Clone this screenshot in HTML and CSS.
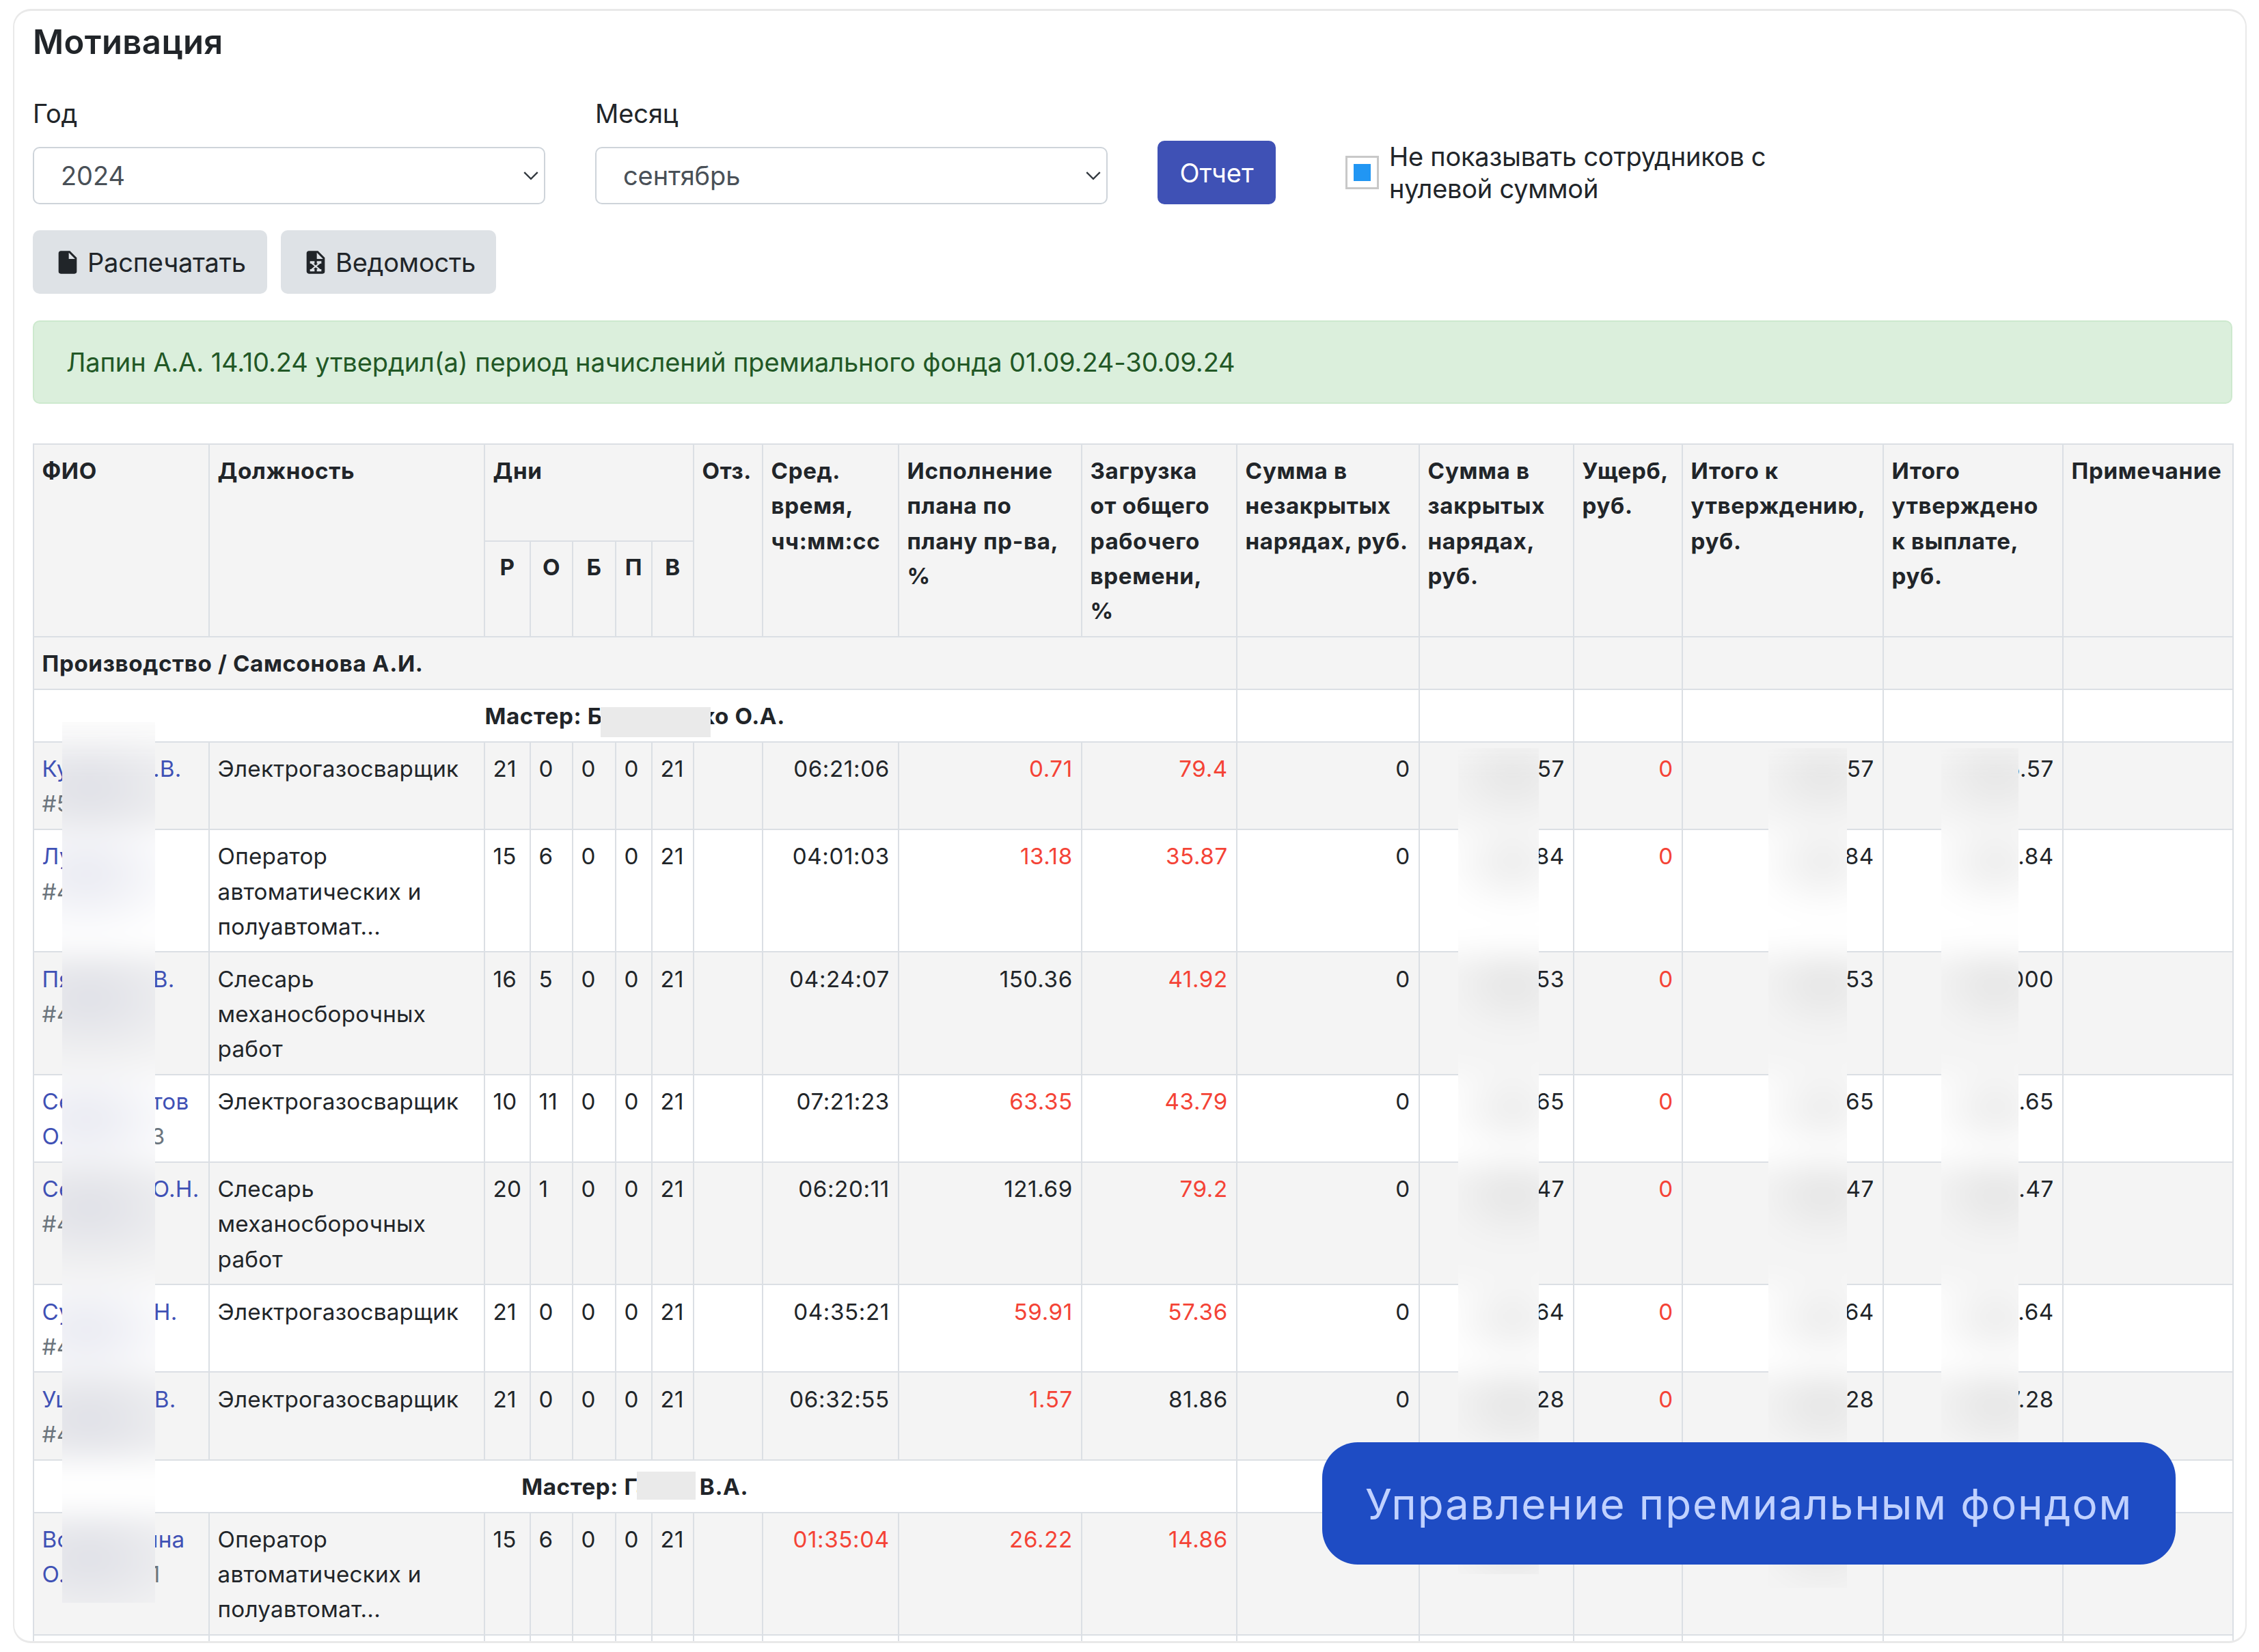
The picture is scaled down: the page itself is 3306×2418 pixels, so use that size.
FILE: index.html
```html
<!DOCTYPE html>
<html lang="ru">
<head>
    <meta charset="UTF-8">
    <meta name="viewport" content="width=device-width, initial-scale=1.0">
    <title>Мотивация</title>
    <link rel="stylesheet" href="styles.css">
</head>
<body>
    <div class="card">
        <h5 class="title">Мотивация</h5>

        <div class="filters">
            <div class="field">
                <label>Год</label>
                <div class="select">
                    <span>2024</span>
                    <svg class="chevron" viewBox="0 0 20 12"><path d="M1 1l9 9 9-9"/></svg>
                </div>
            </div>
            <div class="field">
                <label>Месяц</label>
                <div class="select">
                    <span>сентябрь</span>
                    <svg class="chevron" viewBox="0 0 20 12"><path d="M1 1l9 9 9-9"/></svg>
                </div>
            </div>
            <button class="btn btn-primary">Отчет</button>
            <div class="check">
                <span class="box"></span>
                <span class="check-label">Не показывать сотрудников с<br>нулевой суммой</span>
            </div>
        </div>

        <div class="toolbar">
            <button class="btn btn-light btn-print">
                <svg class="icon" viewBox="0 0 24 24"><path d="M13,9V3.5L18.5,9M6,2C4.89,2 4,2.89 4,4V20A2,2 0 0,0 6,22H18A2,2 0 0,0 20,20V8L14,2H6Z"/></svg>
                <span>Распечатать</span>
            </button>
            <button class="btn btn-light btn-sheet">
                <svg class="icon" viewBox="0 0 24 24"><path d="M13,9H18.5L13,3.5V9M6,2H14L20,8V20A2,2 0 0,1 18,22H6C4.89,22 4,21.1 4,20V4C4,2.89 4.89,2 6,2M17,11H13V13H14L12,14.67L10,13H11V11H7V13H8L11,15.5L8,18H7V20H11V18H10L12,16.33L14,18H13V20H17V18H16L13,15.5L16,13H17V11Z"/></svg>
                <span>Ведомость</span>
            </button>
        </div>

        <div class="alert">Лапин А.А. 14.10.24 утвердил(а) период начислений премиального фонда 01.09.24-30.09.24</div>

        <div class="table-wrap">
            <table>
                <colgroup>
                    <col class="c-fio"><col class="c-post"><col class="c-r"><col class="c-o"><col class="c-b"><col class="c-p"><col class="c-v">
                    <col class="c-otz"><col class="c-time"><col class="c-plan"><col class="c-load"><col class="c-open"><col class="c-closed">
                    <col class="c-damage"><col class="c-total"><col class="c-approved"><col class="c-note">
                </colgroup>
                <thead>
                    <tr class="head-1">
                        <th rowspan="2">ФИО</th>
                        <th rowspan="2">Должность</th>
                        <th colspan="5">Дни</th>
                        <th rowspan="2">Отз.</th>
                        <th rowspan="2">Сред.<br>время,<br>чч:мм:сс</th>
                        <th rowspan="2">Исполнение<br>плана по<br>плану пр-ва,<br>%</th>
                        <th rowspan="2">Загрузка<br>от общего<br>рабочего<br>времени,<br>%</th>
                        <th rowspan="2">Сумма в<br>незакрытых<br>нарядах, руб.</th>
                        <th rowspan="2">Сумма в<br>закрытых<br>нарядах,<br>руб.</th>
                        <th rowspan="2">Ущерб,<br>руб.</th>
                        <th rowspan="2">Итого к<br>утверждению,<br>руб.</th>
                        <th rowspan="2">Итого<br>утверждено<br>к выплате,<br>руб.</th>
                        <th rowspan="2">Примечание</th>
                    </tr>
                    <tr class="head-2">
                        <th>Р</th><th>О</th><th>Б</th><th>П</th><th>В</th>
                    </tr>
                </thead>
                <tbody>
                    <tr class="odd group"><td colspan="11">Производство / Самсонова А.И.</td><td></td><td></td><td></td><td></td><td></td><td></td></tr>
                    <tr class="master"><td colspan="11">Мастер: Б<span class="gap gap-lg"></span>ко О.А.</td><td></td><td></td><td></td><td></td><td></td><td></td></tr>
                    <tr class="odd">
                        <td><div class="name" style="width: 204px"><a>Ку</a><a>.В.</a></div><small>#5</small></td>
                        <td>Электрогазосварщик</td><td>21</td><td>0</td><td>0</td><td>0</td><td>21</td><td></td>
                        <td class="num">06:21:06</td><td class="num red">0.71</td><td class="num red">79.4</td><td class="num">0</td>
                        <td class="num">57</td><td class="num red">0</td><td class="num">57</td><td class="num">5.57</td><td></td>
                    </tr>
                    <tr>
                        <td><div class="name"><a>Лу</a></div><small>#4</small></td>
                        <td>Оператор<br>автоматических и<br>полуавтомат...</td><td>15</td><td>6</td><td>0</td><td>0</td><td>21</td><td></td>
                        <td class="num">04:01:03</td><td class="num red">13.18</td><td class="num red">35.87</td><td class="num">0</td>
                        <td class="num">84</td><td class="num red">0</td><td class="num">84</td><td class="num">.84</td><td></td>
                    </tr>
                    <tr class="odd">
                        <td><div class="name" style="width: 194px"><a>Пя</a><a>В.</a></div><small>#4</small></td>
                        <td>Слесарь<br>механосборочных<br>работ</td><td>16</td><td>5</td><td>0</td><td>0</td><td>21</td><td></td>
                        <td class="num">04:24:07</td><td class="num">150.36</td><td class="num red">41.92</td><td class="num">0</td>
                        <td class="num">53</td><td class="num red">0</td><td class="num">53</td><td class="num">000</td><td></td>
                    </tr>
                    <tr>
                        <td><div class="name" style="width: 215px"><a>Се</a><a>тов</a></div><div class="name" style="width: 180px"><a>О.</a><small>3</small></div></td>
                        <td>Электрогазосварщик</td><td>10</td><td>11</td><td>0</td><td>0</td><td>21</td><td></td>
                        <td class="num">07:21:23</td><td class="num red">63.35</td><td class="num red">43.79</td><td class="num">0</td>
                        <td class="num">65</td><td class="num red">0</td><td class="num">65</td><td class="num">3.65</td><td></td>
                    </tr>
                    <tr class="odd">
                        <td><div class="name" style="width: 230px"><a>Се</a><a>О.Н.</a></div><small>#4</small></td>
                        <td>Слесарь<br>механосборочных<br>работ</td><td>20</td><td>1</td><td>0</td><td>0</td><td>21</td><td></td>
                        <td class="num">06:20:11</td><td class="num">121.69</td><td class="num red">79.2</td><td class="num">0</td>
                        <td class="num">47</td><td class="num red">0</td><td class="num">47</td><td class="num">0.47</td><td></td>
                    </tr>
                    <tr>
                        <td><div class="name" style="width: 198px"><a>Су</a><a>Н.</a></div><small>#4</small></td>
                        <td>Электрогазосварщик</td><td>21</td><td>0</td><td>0</td><td>0</td><td>21</td><td></td>
                        <td class="num">04:35:21</td><td class="num red">59.91</td><td class="num red">57.36</td><td class="num">0</td>
                        <td class="num">64</td><td class="num red">0</td><td class="num">64</td><td class="num">.64</td><td></td>
                    </tr>
                    <tr class="odd">
                        <td><div class="name" style="width: 196px"><a>Уш</a><a>В.</a></div><small>#4</small></td>
                        <td>Электрогазосварщик</td><td>21</td><td>0</td><td>0</td><td>0</td><td>21</td><td></td>
                        <td class="num">06:32:55</td><td class="num red">1.57</td><td class="num">81.86</td><td class="num">0</td>
                        <td class="num">28</td><td class="num red">0</td><td class="num">28</td><td class="num">7.28</td><td></td>
                    </tr>
                    <tr class="master"><td colspan="11">Мастер: Га<span class="gap gap-sm"></span>В.А.</td><td></td><td></td><td></td><td></td><td></td><td></td></tr>
                    <tr class="odd">
                        <td><div class="name" style="width: 209px"><a>Во</a><a>ина</a></div><div class="name" style="width: 173px"><a>О.</a><small>1</small></div></td>
                        <td>Оператор<br>автоматических и<br>полуавтомат...</td><td>15</td><td>6</td><td>0</td><td>0</td><td>21</td><td></td>
                        <td class="num red">01:35:04</td><td class="num red">26.22</td><td class="num red">14.86</td><td></td>
                        <td></td><td></td><td></td><td></td><td></td>
                    </tr>
                    <tr class="next"><td></td><td></td><td></td><td></td><td></td><td></td><td></td><td></td><td></td><td></td><td></td><td></td><td></td><td></td><td></td><td></td><td></td></tr>
                </tbody>
            </table>

            <!-- скрытые данные -->
            <div class="mask mask-m1"></div>
            <div class="mask mask-m2"></div>
            <div class="strip strip-name">
                <div class="rows">
                    <i class="g h2"></i><i class="h3"></i><i class="g h3"></i><i class="h2"></i><i class="g h3"></i><i class="h2"></i><i class="g h2"></i><i class="h1"></i><i class="g h3"></i>
                </div>
            </div>
            <div class="strip strip-closed">
                <div class="rows">
                    <i class="g h2"></i><i class="h3"></i><i class="g h3"></i><i class="h2"></i><i class="g h3"></i><i class="h2"></i><i class="g h2"></i><i class="h1"></i><i class="g h3"></i>
                </div>
            </div>
            <div class="strip strip-total">
                <div class="rows">
                    <i class="g h2"></i><i class="h3"></i><i class="g h3"></i><i class="h2"></i><i class="g h3"></i><i class="h2"></i><i class="g h2"></i><i class="h1"></i><i class="g h3"></i>
                </div>
            </div>
            <div class="strip strip-approved">
                <div class="rows">
                    <i class="g h2"></i><i class="h3"></i><i class="g h3"></i><i class="h2"></i><i class="g h3"></i><i class="h2"></i><i class="g h2"></i><i class="h1"></i>
                </div>
            </div>
        </div>
    </div>

    <div class="badge">Управление премиальным фондом</div>
</body>
</html>
```
FILE: styles.css
```css
* {
    margin: 0;
    padding: 0;
    box-sizing: border-box;
}

html, body {
    height: 100%;
    overflow: hidden;
    background-color: #fff;
}

body {
    position: relative;
    padding: 13px 18px 13px 19px;
    font-family: Inter, "Noto Sans", sans-serif;
    font-size: 38px;
    letter-spacing: -0.1px;
    color: #212529;
}

.card {
    height: 2392px;
    padding: 16px 19px 0 27px;
    border: 3px solid #e9e9e9;
    border-left-width: 2px;
    border-right-width: 2px;
    border-radius: 26px;
    overflow: hidden;
}

.title {
    font-size: 49px;
    font-weight: 600;
    line-height: 60px;
    letter-spacing: 0.4px;
}

/* Filters */
.filters {
    display: flex;
    align-items: flex-end;
    gap: 73px;
    margin-top: 45px;
}

.field {
    width: 750px;
}

.field label {
    display: block;
    height: 78px;
    line-height: 58px;
}

.select {
    display: flex;
    align-items: center;
    justify-content: space-between;
    height: 84px;
    padding: 0 8px 0 39px;
    border: 2px solid #ced4da;
    border-radius: 10px;
    color: #495057;
}

.chevron {
    width: 22px;
    height: 13px;
    fill: none;
    stroke: #343a40;
    stroke-width: 2.2;
}

.btn {
    display: flex;
    align-items: center;
    justify-content: center;
    height: 93px;
    border: 0;
    border-radius: 10px;
    font: inherit;
    letter-spacing: inherit;
}

.btn-primary {
    width: 173px;
    background-color: #3f51b5;
    color: #fff;
}

.check {
    display: flex;
    align-items: center;
    gap: 15px;
    height: 93px;
    margin-left: 29px;
    line-height: 47px;
    letter-spacing: -0.25px;
}

.box {
    width: 49px;
    height: 49px;
    padding: 9px;
    border: 3px solid #c8c8c8;
}

.box::before {
    content: "";
    display: block;
    width: 25px;
    height: 25px;
    background-color: #2196f3;
}

/* Buttons */
.toolbar {
    display: flex;
    gap: 20px;
    margin-top: 38px;
}

.btn-light {
    justify-content: flex-start;
    gap: 9px;
    padding-left: 31px;
    background-color: #dee2e6;
    color: #212529;
    letter-spacing: -0.2px;
}

.btn-print {
    width: 343px;
}

.btn-sheet {
    width: 315px;
}

.icon {
    width: 40px;
    height: 40px;
    fill: #212529;
}

.alert {
    height: 122px;
    margin-top: 39px;
    padding-left: 47px;
    border: 2px solid #cde9ce;
    border-radius: 10px;
    background-color: #dbefdc;
    color: #225826;
    line-height: 119px;
}

/* Table */
.table-wrap {
    position: relative;
    margin-top: 58px;
}

table {
    width: 3220px;
    table-layout: fixed;
    border-collapse: collapse;
    font-size: 33.2px;
    line-height: 51.26px;
    letter-spacing: 0.25px;
}

th, td {
    padding: 13.2px 12.2px 10.4px 11.5px;
    border: 2px solid #dbdfe4;
    text-align: left;
    vertical-align: top;
    white-space: nowrap;
}

th {
    background-color: #f4f4f4;
    font-weight: 700;
    letter-spacing: 0.6px;
}

.c-fio { width: 257px; }
.c-post { width: 403px; }
.c-r { width: 67px; }
.c-o { width: 62px; }
.c-b { width: 63px; }
.c-p { width: 53px; }
.c-v { width: 61px; }
.c-otz { width: 101px; }
.c-time { width: 199px; }
.c-plan { width: 268px; }
.c-load { width: 227px; }
.c-open { width: 267px; }
.c-closed { width: 226px; }
.c-damage { width: 159px; }
.c-total { width: 294px; }
.c-approved { width: 263px; }
.c-note { width: 249px; }

.head-1 {
    height: 142px;
}

.head-2 {
    height: 140px;
}

.head-2 th {
    padding: 11.8px 0;
    text-align: center;
}

.odd td {
    background-color: #f4f4f4;
}

.group td,
.master td {
    height: 77px;
    font-weight: 700;
    letter-spacing: 0.6px;
}

.master td {
    text-align: center;
}

.gap {
    display: inline-block;
}

.gap-lg {
    width: 145px;
}

.gap-sm {
    width: 73px;
}

.next td {
    height: 77px;
}

.num {
    text-align: right;
    letter-spacing: 0.6px;
}

.red {
    color: #f44336;
}

.name {
    display: flex;
    justify-content: space-between;
}

.name a {
    color: #3f51b5;
}

small {
    font-size: inherit;
    color: #6c757d;
}

/* Masks over personal data */
.mask {
    position: absolute;
    background-color: #eaeaea;
}

.mask-m1 {
    top: 386px;
    left: 831px;
    width: 161px;
    height: 44px;
}

.mask-m2 {
    top: 1505px;
    left: 884px;
    width: 86px;
    height: 41px;
}

.strip {
    position: absolute;
    overflow: hidden;
    background-color: #f8f8f8;
}

.rows {
    margin: 0 -60px;
    filter: blur(20px);
}

.rows i {
    display: block;
    background-color: #fff;
}

.rows .g {
    background-color: #f4f4f4;
}

.h1 { height: 77px; }
.h2 { height: 128.2px; }
.h3 { height: 179.4px; }

.strip-name {
    top: 408px;
    left: 43px;
    width: 136px;
    height: 1289px;
    padding-top: 30px;
    background-color: #fcfcfc;
}

.strip-name .h2,
.strip-name .h3 {
    background-image: radial-gradient(ellipse 160px 100px at 95px 64px, #e8e9f1, transparent);
}

.strip-name .g {
    background-image: radial-gradient(ellipse 180px 105px at 100px 66px, #dedfe6, transparent);
}

.strip-closed,
.strip-total,
.strip-approved {
    top: 446px;
    height: 1209px;
}

.strip-closed .rows,
.strip-total .rows,
.strip-approved .rows {
    margin-top: -8px;
}

.strip-closed .h2,
.strip-closed .h3,
.strip-total .h2,
.strip-total .h3,
.strip-approved .h2,
.strip-approved .h3 {
    background-image: radial-gradient(ellipse 100px 75px at 140px 46px, #eaeaea, transparent);
}

.strip-closed .g,
.strip-total .g,
.strip-approved .g {
    background-image: radial-gradient(ellipse 100px 75px at 140px 46px, #e4e4e4, transparent);
}

.strip-closed {
    left: 2086px;
    width: 118px;
}

.strip-total {
    left: 2540px;
    width: 115px;
    height: 1229px;
}

.strip-approved {
    left: 2793px;
    width: 113px;
    height: 1170px;
}

.badge {
    position: absolute;
    top: 2111px;
    left: 1935px;
    width: 1249px;
    height: 179px;
    border-radius: 52px;
    background-color: #1e4cc4;
    color: #c0d1ff;
    font-size: 62px;
    line-height: 182px;
    letter-spacing: 1.9px;
    text-align: center;
}
```
